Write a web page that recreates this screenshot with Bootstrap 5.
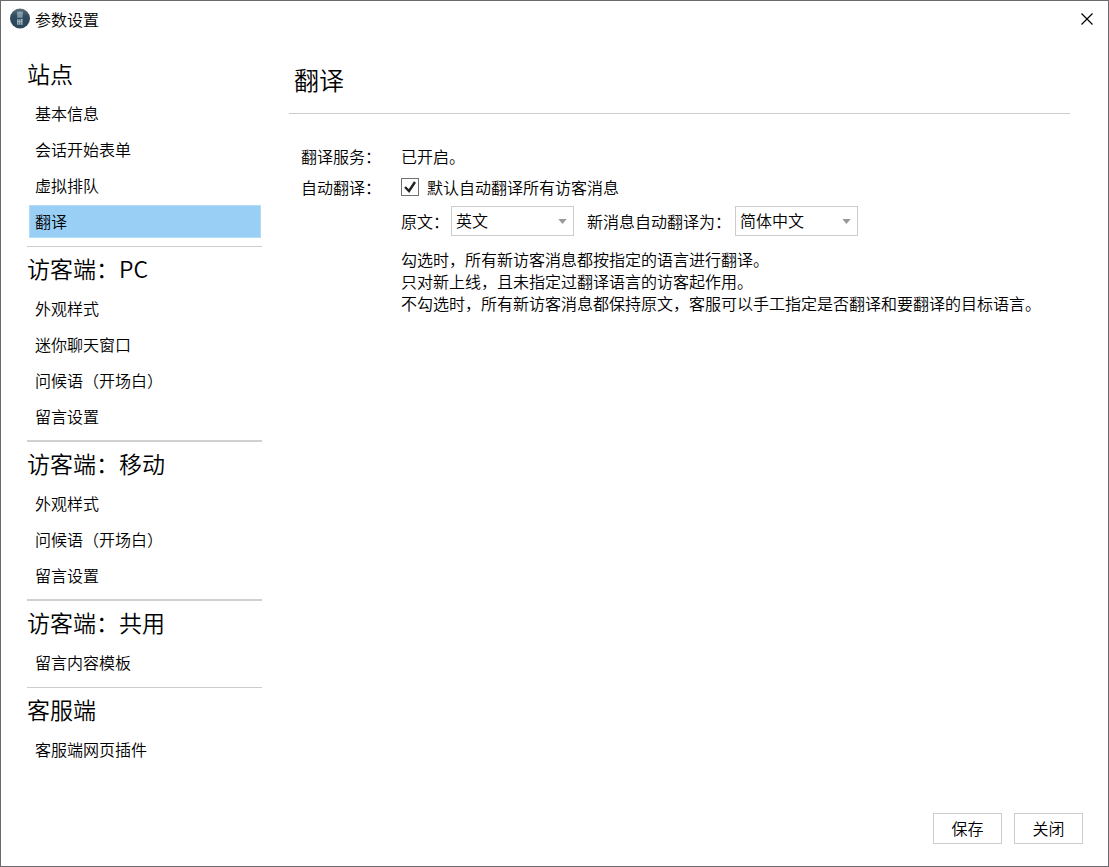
<!DOCTYPE html>
<html lang="zh-CN">
<head>
<meta charset="utf-8">
<meta name="viewport" content="width=device-width, initial-scale=1">
<title>参数设置</title>
<link href="https://cdn.jsdelivr.net/npm/bootstrap@5.3.0/dist/css/bootstrap.min.css" rel="stylesheet">
<style>
body { font-family: "Noto Sans CJK SC", sans-serif; font-size: 16px; font-weight: 350; line-height: 22px; color: #000; background: #fff; }
.window { border: 1px solid #6b696b; }
.titlebar { height: 35px; padding: 0 14px 0 8px; gap: 5px; }
.close-btn { line-height: 0; }
.workarea { padding: 16px 38px 0 26px; gap: 27px; }
.side { width: 235px; }
.side-group { border-bottom: 1px solid #ccc; padding-bottom: 8px; }
.side-group.thick { border-bottom: 2px solid #d0d0d0; padding-bottom: 7px; }
.side-group:last-child { border-bottom: 0; }
.side-title { font-size: 23px; line-height: 42px; margin: 0; padding-bottom: 3px; font-weight: 350; }
.side-list { gap: 3px; padding: 0 1px 0 2px; }
.side-list .nav-link { color: #000; border: 1px solid transparent; border-radius: 0; padding: 0 5px; line-height: 31px; }
.side-list .nav-link.active { background: #99cff5; border-color: #b4dcf7; }
.page-title { font-size: 25px; line-height: 36px; font-weight: 350; margin: 0; padding: 9px 5px 16px; border-bottom: 1px solid #ccc; }
.settings { padding: 26px 0 0 12px; }
.setting-row { min-height: 31px; }
.setting-name { width: 100px; }
.form-check-input.tick { width: 18px; height: 18px; margin: 0; border: 1px solid #707070; border-radius: 0; background-color: #fff; }
.form-check-input.tick:checked { border-color: #707070; background-color: #fff; background-size: 16px 16px; background-image: url("data:image/svg+xml,%3Csvg xmlns='http://www.w3.org/2000/svg' viewBox='0 0 16 16'%3E%3Cpath d='M3 8l4 4 6-9' fill='none' stroke='%23222' stroke-width='2.4'/%3E%3C/svg%3E"); }
.form-select.lang { width: 123px; height: 30px; padding: 0 20px 2px 4px; font-size: 16px; font-weight: 350; line-height: 24px; color: #000; border: 1px solid #ccc; border-radius: 0; background-position: right 6px center; background-size: 9px 5px; background-image: url("data:image/svg+xml,%3Csvg xmlns='http://www.w3.org/2000/svg' viewBox='0 0 10 6'%3E%3Cpath d='M0 0h10L5 6z' fill='%23999'/%3E%3C/svg%3E"); }
.lang-row { padding: 4px 0 0 100px; }
.lang-from { margin-right: 2px; }
.lang-to { margin: 0 4px 0 13px; }
.hints { padding: 12px 0 0 100px; }
.actions { padding: 16px 25px 22px; gap: 12px; }
.btn-plain { width: 69px; height: 31px; padding: 0; font-size: 16px; font-weight: 350; line-height: 29px; color: #000; background: #fff; border: 1px solid #ccc; border-radius: 0; }
</style>
</head>
<body>
<div class="window min-vh-100 d-flex flex-column">
  <header class="titlebar d-flex align-items-center">
    <svg width="21" height="21" viewBox="0 0 21 21" aria-hidden="true">
      <defs><linearGradient id="orb" x1="0" y1="0" x2="0" y2="1"><stop offset="0" stop-color="#5a6f7d"/><stop offset=".4" stop-color="#2f4a5c"/><stop offset="1" stop-color="#2b475a"/></linearGradient></defs>
      <circle cx="11" cy="10.500" r="10" fill="url(#orb)"/>
      <path d="M8 3.500h6v6H8zM8 11h6v6H8z" fill="#8ca7b6" fill-opacity=".55"/>
      <path d="M8 5h6M8.500 7h4.500M8.500 9h4.500M11 3.500v2M8.500 11.500v5M10.500 11.500v5M8 13.500h5.500M12.500 11.500v5M12 11.500h2" fill="none" stroke="#a9bdc8" stroke-opacity=".7"/>
    </svg>
    <span class="flex-grow-1">参数设置</span>
    <button type="button" class="close-btn btn p-0 border-0" aria-label="关闭窗口"><svg width="14" height="14" viewBox="0 0 14 14"><path d="M1.500 1.500l11 11M12.500 1.500l-11 11" stroke="#000" stroke-width="1.200"/></svg></button>
  </header>
  <div class="workarea d-flex flex-grow-1">
    <nav class="side flex-shrink-0" aria-label="设置分类">
      <section class="side-group">
        <h2 class="side-title">站点</h2>
        <div class="side-list nav flex-column">
          <a class="nav-link" href="#">基本信息</a>
          <a class="nav-link" href="#">会话开始表单</a>
          <a class="nav-link" href="#">虚拟排队</a>
          <a class="nav-link active" href="#" aria-current="page">翻译</a>
        </div>
      </section>
      <section class="side-group thick">
        <h2 class="side-title">访客端：PC</h2>
        <div class="side-list nav flex-column">
          <a class="nav-link" href="#">外观样式</a>
          <a class="nav-link" href="#">迷你聊天窗口</a>
          <a class="nav-link" href="#">问候语（开场白）</a>
          <a class="nav-link" href="#">留言设置</a>
        </div>
      </section>
      <section class="side-group thick">
        <h2 class="side-title">访客端：移动</h2>
        <div class="side-list nav flex-column">
          <a class="nav-link" href="#">外观样式</a>
          <a class="nav-link" href="#">问候语（开场白）</a>
          <a class="nav-link" href="#">留言设置</a>
        </div>
      </section>
      <section class="side-group">
        <h2 class="side-title">访客端：共用</h2>
        <div class="side-list nav flex-column">
          <a class="nav-link" href="#">留言内容模板</a>
        </div>
      </section>
      <section class="side-group">
        <h2 class="side-title">客服端</h2>
        <div class="side-list nav flex-column">
          <a class="nav-link" href="#">客服端网页插件</a>
        </div>
      </section>
    </nav>
    <main class="flex-grow-1">
      <h1 class="page-title">翻译</h1>
      <form class="settings">
        <div class="setting-row d-flex align-items-center">
          <span class="setting-name">翻译服务：</span><span>已开启。</span>
        </div>
        <div class="setting-row d-flex align-items-center">
          <span class="setting-name">自动翻译：</span>
          <div class="d-flex align-items-center gap-2">
            <input class="form-check-input tick" type="checkbox" id="auto" checked>
            <label for="auto">默认自动翻译所有访客消息</label>
          </div>
        </div>
        <div class="lang-row d-flex align-items-center">
          <label for="from" class="lang-from">原文：</label>
          <select class="form-select lang" id="from"><option>英文</option></select>
          <label for="to" class="lang-to">新消息自动翻译为：</label>
          <select class="form-select lang" id="to"><option>简体中文</option></select>
        </div>
        <div class="hints">
          <div>勾选时，所有新访客消息都按指定的语言进行翻译。</div>
          <div>只对新上线，且未指定过翻译语言的访客起作用。</div>
          <div>不勾选时，所有新访客消息都保持原文，客服可以手工指定是否翻译和要翻译的目标语言。</div>
        </div>
      </form>
    </main>
  </div>
  <footer class="actions d-flex justify-content-end">
    <button type="button" class="btn btn-plain">保存</button>
    <button type="button" class="btn btn-plain">关闭</button>
  </footer>
</div>
<script src="https://cdn.jsdelivr.net/npm/bootstrap@5.3.0/dist/js/bootstrap.bundle.min.js"></script>
</body>
</html>
